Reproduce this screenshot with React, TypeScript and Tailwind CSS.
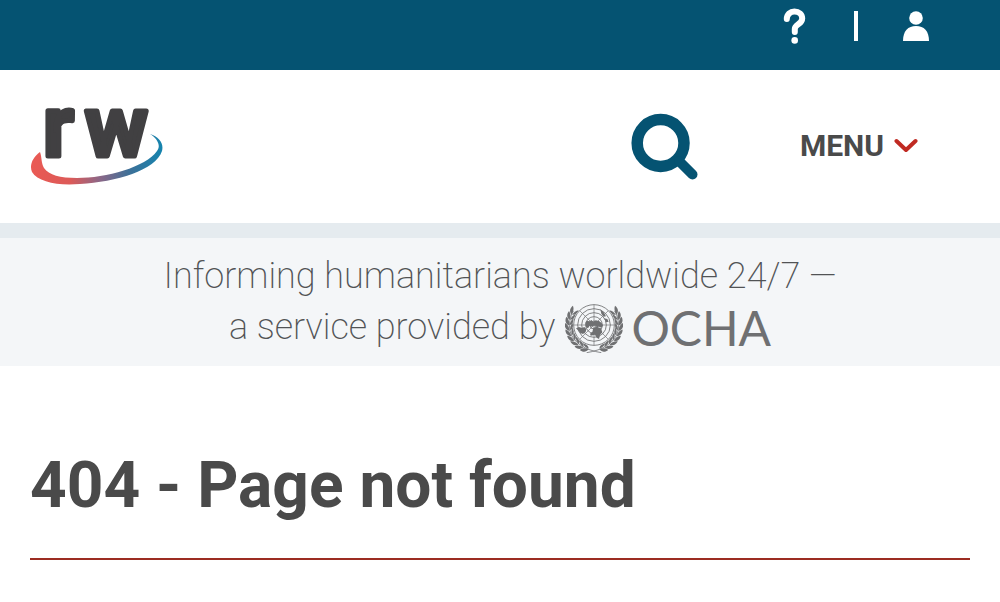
import React from "react";

function ReliefWebLogo() {
  return (
    <svg viewBox="0 -36 134 152" className="block h-[152px] w-[134px]" role="img" aria-label="ReliefWeb">
      <defs>
        <linearGradient id="swoosh" x1="0" y1="0" x2="1" y2="0">
          <stop offset="0" stopColor="#ea5a54" />
          <stop offset="0.3" stopColor="#dc5a58" />
          <stop offset="0.52" stopColor="#8d6787" />
          <stop offset="0.75" stopColor="#3d7098" />
          <stop offset="1" stopColor="#1584ae" />
        </linearGradient>
      </defs>
      <path
        d="M10 45 C3 50 -1 58 2 65 C8 75 28 79 50 77 C86 75 126 63 132 44 C134 36 129 30 120 27 C128 32 131 39 127 44 C116 60 76 71 47 71 C30 71 19 68 14 61 C11 56 12 50 10 45 Z"
        fill="url(#swoosh)"
      />
      <g
        fill="#414042"
        stroke="#414042"
        strokeWidth="5"
        strokeLinejoin="round"
        fontFamily="Roboto, sans-serif"
        fontWeight="600"
        fontSize="85"
      >
        <text x="13" y="49">r</text>
        <text x="55" y="49">w</text>
      </g>
    </svg>
  );
}

const leaves = Array.from({ length: 9 }, (_, i) => {
  const angle = 108 + i * 13;
  const rad = (angle * Math.PI) / 180;
  return { angle, x: 86 + 75 * Math.cos(rad), y: 67 + 73 * Math.sin(rad) };
});

function Branch() {
  return (
    <g fill="currentColor">
      <path d="M108 149 C60 142 22 118 14 84 C10 62 14 42 24 24" fill="none" stroke="currentColor" strokeWidth="2.4" />
      {leaves.map(({ angle, x, y }) => (
        <g key={angle} transform={`translate(${x} ${y}) rotate(${angle + 90})`}>
          <path d="M-8 0 C-3 -12 8 -14 17 -10 C11 -2 2 1 -8 0 Z" />
          <path d="M-7 2 C0 2 10 5 15 12 C5 14 -3 11 -7 2 Z" />
        </g>
      ))}
    </g>
  );
}

function UnEmblem() {
  return (
    <svg viewBox="0 0 172 150" className="h-[50px] w-[58px] shrink-0" aria-hidden="true">
      <Branch />
      <g transform="translate(172 0) scale(-1 1)">
        <Branch />
      </g>
      <circle cx="86" cy="66" r="63" fill="#f4f6f8" />
      <g fill="none" stroke="currentColor" strokeWidth="2.6">
        <circle cx="86" cy="66" r="61" />
        <circle cx="86" cy="66" r="49" />
        <circle cx="86" cy="66" r="37" />
        <circle cx="86" cy="66" r="25" />
        <circle cx="86" cy="66" r="12" />
        <path d="M86 5V127M25 66H147M43 23L129 109M129 23L43 109" strokeWidth="2" />
      </g>
      <g fill="currentColor">
        <path d="M60 60 L64 53 L72 55 L79 51 L83 57 L91 52 L101 54 L109 60 L113 68 L108 74 L101 71 L94 72 L87 66 L80 71 L73 68 L68 76 L62 73 Z" />
        <path d="M32 76 L41 72 L50 75 L57 72 L63 78 L61 87 L53 93 L45 90 L39 83 Z" />
        <path d="M84 74 L94 71 L107 76 L111 88 L104 96 L101 108 L94 104 L89 95 L76 98 L74 92 L81 87 Z" />
        <path d="M105 19 L114 26 L122 40 L115 41 L108 32 Z M116 46 L126 48 L130 56 L122 58 Z" />
      </g>
    </svg>
  );
}

export default function App() {
  return (
    <div className="min-h-screen bg-white font-['Roboto',sans-serif] text-[#4a4a4a]">
      <nav aria-label="Account" className="flex h-[70px] items-start justify-end gap-10 bg-[#055372] pr-[70px] pt-2 text-white">
        <a href="#help" aria-label="Help" className="flex h-9 w-8 items-center justify-center">
          <svg viewBox="0 0 24 36" className="h-9 w-6" aria-hidden="true">
            <path
              d="M4.8 11 C4.8 6.4 8.4 3.4 12.4 3.4 C17 3.4 20.2 6.6 20.2 10.5 C20.2 16.5 12.8 16 12.8 21 V24"
              fill="none"
              stroke="currentColor"
              strokeWidth="6"
              strokeLinecap="round"
            />
            <circle cx="12.7" cy="32.4" r="3.3" fill="currentColor" />
          </svg>
        </a>
        <span className="ml-1 mt-[3px] h-[30px] w-1 bg-white" />
        <a href="#login" aria-label="Log in" className="ml-1 flex h-9 w-7 items-center justify-center">
          <svg viewBox="0 0 26 30" className="h-[30px] w-[26px]" fill="currentColor" aria-hidden="true">
            <circle cx="13" cy="7" r="6.8" />
            <path d="M0 30 C0 20 5 15 13 15 S26 20 26 30 Z" />
          </svg>
        </a>
      </nav>

      <header className="flex h-[153px] items-center justify-between pl-[30px] pr-[82px]">
        <a href="#home">
          <ReliefWebLogo />
        </a>
        <div className="flex items-center gap-[101px]">
          <button type="button" aria-label="Search" className="text-[#055372]">
            <svg viewBox="0 0 68 68" className="block h-[68px] w-[68px]" aria-hidden="true">
              <circle cx="29.6" cy="30" r="23.4" fill="none" stroke="currentColor" strokeWidth="11.5" />
              <path d="M48 48L61.5 61.5" stroke="currentColor" strokeWidth="10" strokeLinecap="round" />
            </svg>
          </button>
          <button type="button" className="flex items-center gap-2.5 pb-0.5 text-[30px] leading-9 font-bold">
            MENU
            <svg viewBox="0 0 24 16" className="h-4 w-6" aria-hidden="true">
              <path d="M2.5 3L12 12L21.5 3" fill="none" stroke="#c02a22" strokeWidth="4" strokeLinecap="round" strokeLinejoin="round" />
            </svg>
          </button>
        </div>
      </header>

      <section className="flex flex-col items-center border-t-[15px] border-[#e5ebef] bg-[#f4f6f8] pt-[13px] pb-[13px] text-4xl font-extralight text-[#515355]">
        <p className="leading-[51px]">Informing humanitarians worldwide 24/7 —</p>
        <p className="flex h-[51px] items-center gap-2.5 leading-[51px]">
          a service provided by
          <a href="#ocha" className="flex items-center gap-2 text-[#6f7072]">
            <UnEmblem />
            <span className="font-['Lato',sans-serif] text-[48px] font-normal">OCHA</span>
          </a>
        </p>
      </section>

      <main className="px-[30px] pt-[82px]">
        <h1 className="border-b-2 border-[#9c2c22] pb-[34px] text-[64px] leading-[76px] font-bold">
          404 - Page not found
        </h1>
      </main>
    </div>
  );
}
